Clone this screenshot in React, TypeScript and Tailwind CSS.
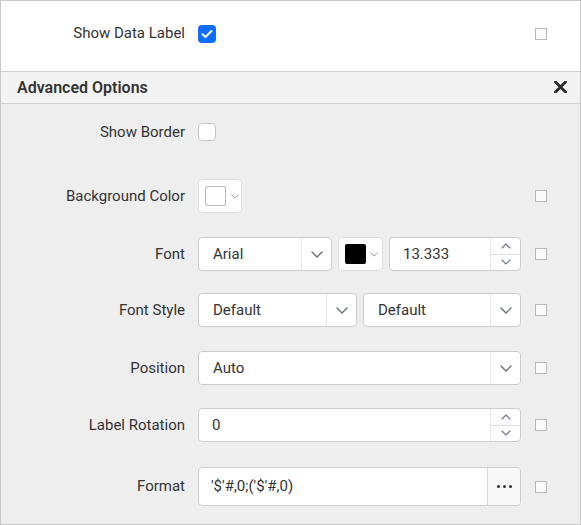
import React from "react";

const font = { fontFamily: "Roboto, 'Noto Sans', sans-serif" };

function Chevron({ w = 12, h = 7, color = "#5b6470" }: { w?: number; h?: number; color?: string }) {
  return (
    <svg width={w} height={h} viewBox="0 0 12 7" fill="none">
      <path d="M1 1 L6 6 L11 1" stroke={color} strokeWidth="1.2" strokeLinecap="round" strokeLinejoin="round" />
    </svg>
  );
}

function ChevronUp({ color = "#6b7a8c" }: { color?: string }) {
  return (
    <svg width="10" height="6" viewBox="0 0 10 6" fill="none">
      <path d="M1 5 L5 1 L9 5" stroke={color} strokeWidth="1.1" strokeLinecap="round" strokeLinejoin="round" />
    </svg>
  );
}

function ChevronDownSmall({ color = "#6b7a8c" }: { color?: string }) {
  return (
    <svg width="10" height="6" viewBox="0 0 10 6" fill="none">
      <path d="M1 1 L5 5 L9 1" stroke={color} strokeWidth="1.1" strokeLinecap="round" strokeLinejoin="round" />
    </svg>
  );
}

function SmallBox() {
  return <div className="w-[12px] h-[12px] border border-[#b8b8b8] bg-[#fafafa] shrink-0" />;
}

function Row({
  label,
  children,
  box = true,
  className = "",
  h = "h-[34px]",
}: {
  label: string;
  children: React.ReactNode;
  box?: boolean;
  className?: string;
  h?: string;
}) {
  return (
    <div className={`flex items-center ${h} ${className}`}>
      <div className="w-[184px] text-right text-[15px] text-[#333333] leading-none">{label}</div>
      <div className="ml-[13px] w-[323px] flex items-center h-full">{children}</div>
      <div className="ml-[14px] flex items-center">{box ? <SmallBox /> : null}</div>
    </div>
  );
}

function Select({ value, width }: { value: string; width: string }) {
  return (
    <div className={`${width} h-full flex bg-white border border-[#cccccc] rounded-[4px]`}>
      <div className="flex-1 flex items-center pl-[14px] text-[15px] text-[#333333]">{value}</div>
      <div className="w-[30px] border-l border-[#e6e6e6] flex items-center justify-center">
        <Chevron />
      </div>
    </div>
  );
}

function Spinner({ value, width }: { value: string; width: string }) {
  return (
    <div className={`${width} h-full flex bg-white border border-[#cccccc] rounded-[4px]`}>
      <div className="flex-1 flex items-center pl-[13px] text-[15px] text-[#333333]">{value}</div>
      <div className="w-[30px] border-l border-[#e6e6e6] flex flex-col">
        <div className="flex-1 flex items-center justify-center border-b border-[#e0e0e0]">
          <ChevronUp />
        </div>
        <div className="flex-1 flex items-center justify-center">
          <ChevronDownSmall />
        </div>
      </div>
    </div>
  );
}

export default function App() {
  return (
    <div style={font} className="w-[581px] h-[525px] border border-[#c8c8c8] bg-[#eeeeee] flex flex-col overflow-hidden">
      {/* top section */}
      <div className="h-[71px] bg-white border-b border-[#d0d0d0] flex items-center pb-[5px]">
        <div className="w-[184px] text-right text-[15px] text-[#333333] leading-none">Show Data Label</div>
        <div className="ml-[13px] w-[323px] flex items-center">
          <div className="w-[18px] h-[18px] rounded-[4px] bg-[#0d6efd] flex items-center justify-center">
            <svg width="12" height="10" viewBox="0 0 12 10" fill="none">
              <path d="M1.5 5.2 L4.5 8 L10.5 2" stroke="white" strokeWidth="2" strokeLinecap="round" strokeLinejoin="round" />
            </svg>
          </div>
        </div>
        <div className="ml-[14px] flex items-center">
          <SmallBox />
        </div>
      </div>

      {/* header */}
      <div className="h-[32px] bg-[#f3f3f3] border-b border-[#d0d0d0] flex items-center justify-between pl-[16px] pr-[13px] pt-[1px]">
        <div className="text-[16px] font-semibold text-[#333333] leading-none">Advanced Options</div>
        <svg width="13" height="12" viewBox="0 0 13 12" fill="none" className="mb-[2px]">
          <path d="M1.5 1 L11.5 11 M11.5 1 L1.5 11" stroke="#2b2b2b" strokeWidth="2.8" strokeLinecap="square" />
        </svg>
      </div>

      {/* body */}
      <Row label="Show Border" box={false} h="h-[18px]" className="mt-[19px]">
        <div className="w-[18px] h-[18px] rounded-[4px] bg-white border border-[#c4c4c4]" />
      </Row>

      <Row label="Background Color" className="mt-[38px]">
        <div className="w-[44px] h-full bg-white border border-[#dddddd] rounded-[4px] flex items-center pl-[6px]">
          <div className="w-[21px] h-[20px] bg-white border border-[#bbbbbb] rounded-[2px]" />
          <div className="ml-[5px] flex items-center">
            <Chevron w={8} h={5} color="#777777" />
          </div>
        </div>
      </Row>

      <Row label="Font" className="mt-[24px]">
        <Select value="Arial" width="w-[134px]" />
        <div className="ml-[6px] w-[45px] h-full bg-white border border-[#dddddd] rounded-[4px] flex items-center pl-[6px]">
          <div className="w-[21px] h-[20px] bg-black rounded-[2px]" />
          <div className="ml-[4px] flex items-center">
            <Chevron w={8} h={5} color="#777777" />
          </div>
        </div>
        <div className="ml-[6px] h-full flex-1 flex">
          <Spinner value="13.333" width="w-full" />
        </div>
      </Row>

      <Row label="Font Style" className="mt-[22px]">
        <Select value="Default" width="w-[159px]" />
        <div className="ml-[6px] flex-1 h-full flex">
          <Select value="Default" width="w-full" />
        </div>
      </Row>

      <Row label="Position" className="mt-[24px]">
        <Select value="Auto" width="w-full" />
      </Row>

      <Row label="Label Rotation" className="mt-[23px]">
        <Spinner value="0" width="w-full" />
      </Row>

      <Row label="Format" className="mt-[25px]" h="h-[39px]">
        <div className="w-full h-full flex bg-white border border-[#cccccc] rounded-[4px] overflow-hidden">
          <div className="flex-1 flex items-center pl-[12px] text-[15px] text-[#333333]">'$'#,0;('$'#,0)</div>
          <div className="w-[33px] border-l border-[#d8d8d8] bg-[#f8f8f8] flex items-center justify-center gap-[3px]">
            <div className="w-[3px] h-[3px] rounded-full bg-[#333333]" />
            <div className="w-[3px] h-[3px] rounded-full bg-[#333333]" />
            <div className="w-[3px] h-[3px] rounded-full bg-[#333333]" />
          </div>
        </div>
      </Row>
    </div>
  );
}
